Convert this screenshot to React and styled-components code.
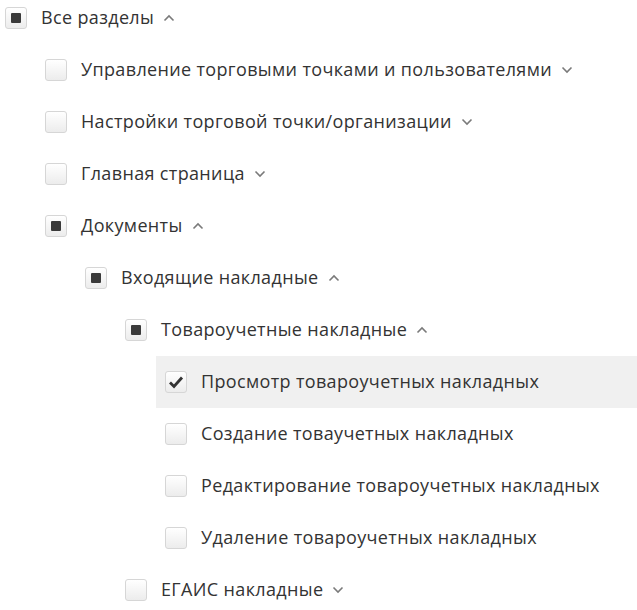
import React from "react";
import styled, { createGlobalStyle } from "styled-components";

const Global = createGlobalStyle`
  html, body { margin: 0; padding: 0; background: #fff; }
  body { font-family: "Open Sans", "Liberation Sans", sans-serif; }
`;

const Tree = styled.div`
  display: flex;
  flex-direction: column;
  width: 637px;
`;

const Row = styled.div`
  display: flex;
  align-items: center;
  height: 52px;
  margin-top: ${(p) => (p.$first ? "-8px" : "0")};
  padding-left: ${(p) => 5 + p.$level * 40}px;
`;

const Highlight = styled.div`
  display: flex;
  align-items: center;
  align-self: stretch;
  flex: 1;
  margin-left: -9px;
  padding-left: 9px;
  background: ${(p) => (p.$active ? "#f0f0f0" : "transparent")};
`;

const Box = styled.span`
  flex: none;
  width: 22px;
  height: 22px;
  box-sizing: border-box;
  border: 1px solid #d6d6d6;
  border-radius: 3px;
  background: linear-gradient(#ffffff, #ececec);
  display: flex;
  align-items: center;
  justify-content: center;
`;

const Square = styled.span`
  width: 10px;
  height: 10px;
  background: #3a3a3a;
  border-radius: 1px;
`;

const Label = styled.span`
  margin-left: 14px;
  font-size: 18px;
  color: #333;
  white-space: nowrap;
  letter-spacing: 0.35px;
  position: relative;
  top: -1px;
`;

const Chevron = styled.svg`
  margin-left: 9px;
  flex: none;
`;

const Check = () => (
  <svg width="16" height="14" viewBox="0 0 16 14">
    <path d="M2 7.5 L6 11.5 L14 2.5" fill="none" stroke="#333" strokeWidth="2.8" />
  </svg>
);

const Arrow = ({ up }) => (
  <Chevron width="12" height="8" viewBox="0 0 12 8">
    <path
      d={up ? "M1.5 6.5 L6 2 L10.5 6.5" : "M1.5 1.5 L6 6 L10.5 1.5"}
      fill="none"
      stroke="#7a7a7a"
      strokeWidth="1.6"
    />
  </Chevron>
);

const items = [
  { level: 0, label: "Все разделы", state: "partial", arrow: "up" },
  { level: 1, label: "Управление торговыми точками и пользователями", state: "none", arrow: "down" },
  { level: 1, label: "Настройки торговой точки/организации", state: "none", arrow: "down" },
  { level: 1, label: "Главная страница", state: "none", arrow: "down" },
  { level: 1, label: "Документы", state: "partial", arrow: "up" },
  { level: 2, label: "Входящие накладные", state: "partial", arrow: "up" },
  { level: 3, label: "Товароучетные накладные", state: "partial", arrow: "up" },
  { level: 4, label: "Просмотр товароучетных накладных", state: "checked", active: true },
  { level: 4, label: "Создание товаучетных накладных", state: "none" },
  { level: 4, label: "Редактирование товароучетных накладных", state: "none" },
  { level: 4, label: "Удаление товароучетных накладных", state: "none" },
  { level: 3, label: "ЕГАИС накладные", state: "none", arrow: "down" },
];

export default function App() {
  return (
    <>
      <Global />
      <Tree>
        {items.map((it, i) => (
          <Row key={i} $level={it.level} $first={i === 0}>
            <Highlight $active={it.active}>
              <Box>
                {it.state === "partial" && <Square />}
                {it.state === "checked" && <Check />}
              </Box>
              <Label>{it.label}</Label>
              {it.arrow && <Arrow up={it.arrow === "up"} />}
            </Highlight>
          </Row>
        ))}
      </Tree>
    </>
  );
}
